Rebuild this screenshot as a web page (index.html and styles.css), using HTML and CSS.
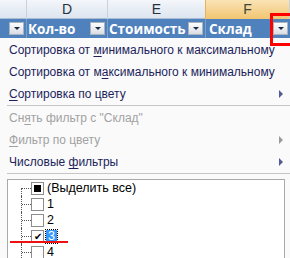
FILE: index.html
```html
<!DOCTYPE html>
<html lang="ru">
<head>
    <meta charset="UTF-8">
    <title>Фильтр</title>
    <link rel="stylesheet" href="styles.css">
</head>
<body>
    <div class="sheet">
        <!-- Заголовки столбцов -->
        <div class="col-heads">
            <div class="col-head"></div>
            <div class="col-head">D</div>
            <div class="col-head">E</div>
            <div class="col-head active">F</div>
        </div>

        <!-- Шапка таблицы -->
        <div class="table-heads">
            <div class="cell"><span class="drop"></span></div>
            <div class="cell"><span class="title">Кол-во</span><span class="drop"></span></div>
            <div class="cell"><span class="title">Стоимость</span><span class="drop"></span></div>
            <div class="cell"><span class="title">Склад</span><span class="drop"></span></div>
        </div>

        <!-- Меню фильтра -->
        <div class="menu">
            <div class="item">Сортировка от <u>м</u>инимального к максимальному</div>
            <div class="item">Сортировка от м<u>а</u>ксимального к минимальному</div>
            <div class="item sub"><u>С</u>ортировка по цвету</div>
            <div class="sep"></div>
            <div class="item off">Сн<u>я</u>ть фильтр с "Склад"</div>
            <div class="item off sub"><u>Ф</u>ильтр по цвету</div>
            <div class="item sub">Числовые <u>ф</u>ильтры</div>
            <div class="sep"></div>

            <div class="list">
                <div class="row">
                    <span class="branch first"></span>
                    <span class="check mixed"></span>
                    <span class="label">(Выделить все)</span>
                </div>
                <div class="row">
                    <span class="branch"></span>
                    <span class="check"></span>
                    <span class="label">1</span>
                </div>
                <div class="row">
                    <span class="branch"></span>
                    <span class="check"></span>
                    <span class="label">2</span>
                </div>
                <div class="row">
                    <span class="branch"></span>
                    <span class="check on">&#10004;</span>
                    <span class="label focus">3</span>
                </div>
                <div class="row">
                    <span class="branch"></span>
                    <span class="check"></span>
                    <span class="label">4</span>
                </div>
            </div>
        </div>

        <!-- Пометки красным -->
        <div class="mark-box"></div>
        <div class="mark-line"></div>
    </div>
</body>
</html>
```

FILE: styles.css
```css
/* Общие стили */
body {
    margin: 0;
    background: #fafafa;
    font-family: "Liberation Sans", Arial, sans-serif;
    overflow: hidden;
}
.sheet {
    position: relative;
    width: 290px;
    height: 258px;
    overflow: hidden;
}

/* Заголовки столбцов */
.col-heads,
.table-heads {
    display: grid;
    grid-template-columns: 27px 81px 98px 1fr;
}
.col-heads {
    height: 19px;
    background: linear-gradient(#f3f6fa, #dde5ef);
    border-bottom: 1px solid #a9bdd6;
    box-sizing: border-box;
}
.col-head {
    border-right: 1px solid #c5d2e2;
    text-align: center;
    font-size: 14px;
    line-height: 19px;
    color: #27323e;
}
.col-head.active {
    background: linear-gradient(#fae3b5, #f2c572);
    border-left: 1px solid #e7b35a;
    margin-left: -1px;
    color: #3b4a3a;
}

/* Шапка таблицы */
.table-heads {
    height: 19px;
    background: #4f81bd;
}
.cell {
    display: flex;
    align-items: center;
    border-right: 1px solid #7ba0cc;
    padding-left: 1px;
    padding-right: 2px;
}
.cell:last-child {
    border-right: none;
    padding-left: 3px;
}
.title {
    flex: 1;
    color: #ffffff;
    font-family: "Open Sans", sans-serif;
    font-weight: bold;
    font-size: 13.5px;
    white-space: nowrap;
}
.drop {
    position: relative;
    width: 13px;
    height: 11px;
    margin-left: auto;
    border: 1px solid #aab3c0;
    background: linear-gradient(#fdfdfd, #d9dde4);
}
.drop::after {
    content: '';
    position: absolute;
    left: 4px;
    top: 4px;
    border-left: 3px solid transparent;
    border-right: 3px solid transparent;
    border-top: 3px solid #1d2a44;
}

/* Меню */
.menu {
    padding-top: 1px;
    font-size: 12px;
    color: #1c1f5c;
}
.item {
    position: relative;
    height: 22px;
    line-height: 22px;
    padding-left: 9px;
    white-space: nowrap;
}
.item u {
    text-underline-offset: 2px;
}
.item.off {
    color: #a2a2a2;
}
.item.sub::after {
    content: '';
    position: absolute;
    left: 279px;
    top: 7px;
    border-top: 4px solid transparent;
    border-bottom: 4px solid transparent;
    border-left: 4px solid #4f5b94;
}
.item.off.sub::after {
    border-left-color: #9a9a9a;
}
.sep {
    height: 1px;
    margin: 0 0 1px 7px;
    background: #c6c6c6;
}

/* Список значений */
.list {
    margin: 5px 5px 0 7px;
    height: 90px;
    border: 1px solid #a9a9a9;
    background: #ffffff;
    padding: 0 0 0 13px;
    color: #000000;
}
.row {
    display: flex;
    align-items: center;
    height: 16px;
}
.branch {
    align-self: stretch;
    width: 10px;
    border-left: 1px dotted #555555;
    box-sizing: border-box;
}
.branch::after {
    content: '';
    display: block;
    margin-top: 8px;
    border-top: 1px dotted #555555;
}
.branch.first {
    margin-top: 8px;
}
.branch.first::after {
    margin-top: 0;
}
.check {
    position: relative;
    width: 11px;
    height: 11px;
    border: 1px solid #8c8c8c;
    background: #ffffff;
    font-size: 10px;
    line-height: 11px;
    text-align: center;
}
.check.mixed::after {
    content: '';
    position: absolute;
    left: 2px;
    top: 2px;
    width: 7px;
    height: 7px;
    background: #000000;
}
.check.on {
    color: #000000;
}
.label {
    margin-left: 2px;
    padding: 0 1px;
    font-size: 12.5px;
    line-height: 13px;
}
.label.focus {
    padding: 0 2px;
    background: #3399ff;
    color: #ffffff;
    outline: 1px dotted #000000;
}

/* Красные пометки */
.mark-box {
    position: absolute;
    left: 270px;
    top: 13px;
    width: 30px;
    height: 27px;
    border: 3px solid #ff0000;
}
.mark-line {
    position: absolute;
    left: 10px;
    top: 241px;
    width: 58px;
    height: 2px;
    background: #ee1111;
}
```
